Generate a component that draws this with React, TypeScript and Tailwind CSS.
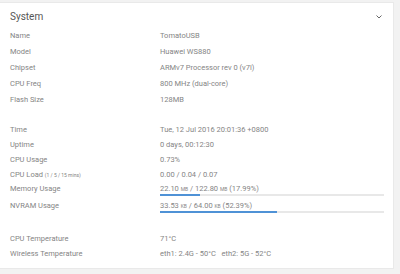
import React from "react";

const font = { fontFamily: "Roboto, 'Liberation Sans', sans-serif" };

function Row({ label, children, h = "h-[16px]" }: { label: React.ReactNode; children: React.ReactNode; h?: string }) {
  return (
    <div className={`flex items-center ${h}`}>
      <div className="w-[150px] shrink-0">{label}</div>
      <div className="flex-1">{children}</div>
    </div>
  );
}

function BarRow({ label, children, pct }: { label: string; children: React.ReactNode; pct: number }) {
  return (
    <div className="flex h-[17px]">
      <div className="w-[150px] shrink-0 h-[12px] leading-[14px]">{label}</div>
      <div className="flex-1 pr-[9px]">
        <div className="h-[12px] leading-[14px]">{children}</div>
        <div className="h-[2px] bg-[#e8e8e8]">
          <div className="h-full bg-[#4f92d6]" style={{ width: `${pct}%` }} />
        </div>
      </div>
    </div>
  );
}

const U = ({ children }: { children: React.ReactNode }) => <span className="text-[5px]">{children}</span>;

export default function App() {
  return (
    <div className="w-[400px] h-[274px] bg-[#f2f2f2] pt-[2px] pr-[6px]" style={font}>
      <div className="bg-white border border-[#e9e9e9] border-l-0 h-[267px] text-[7.5px] text-[#858585]">
        <div className="flex items-center justify-between h-[25px] pl-[10px] pr-[10px]">
          <span className="text-[10px] text-[#555] pt-[1px]">System</span>
          <svg width="8" height="6" viewBox="0 0 8 6" fill="none" className="mt-[2px]">
            <path d="M1.5 1.5 L4 4 L6.5 1.5" stroke="#666" strokeWidth="1" />
          </svg>
        </div>
        <div className="pl-[10px]">
          <Row label="Name">TomatoUSB</Row>
          <Row label="Model">Huawei WS880</Row>
          <Row label="Chipset">ARMv7 Processor rev 0 (v7l)</Row>
          <Row label="CPU Freq">800 MHz (dual-core)</Row>
          <Row label="Flash Size">128MB</Row>
          <div className="h-[14px]" />
          <Row label="Time" h="h-[15px]">Tue, 12 Jul 2016 20:01:36 +0800</Row>
          <Row label="Uptime" h="h-[15px]">0 days, 00:12:30</Row>
          <Row label="CPU Usage" h="h-[15px]">0.73%</Row>
          <Row label={<span>CPU Load <span className="text-[5px]">(1 / 5 / 15 mins)</span></span>} h="h-[15px]">0.00 / 0.04 / 0.07</Row>
          <BarRow label="Memory Usage" pct={17.99}>22.10 <U>MB</U> / 122.80 <U>MB</U> (17.99%)</BarRow>
          <BarRow label="NVRAM Usage" pct={52.39}>33.53 <U>KB</U> / 64.00 <U>KB</U> (52.39%)</BarRow>
          <div className="h-[15px]" />
          <Row label="CPU Temperature" h="h-[15px]">71°C</Row>
          <Row label="Wireless Temperature" h="h-[15px]">eth1: 2.4G - 50°C&nbsp;&nbsp;&nbsp;eth2: 5G - 52°C</Row>
        </div>
      </div>
    </div>
  );
}
